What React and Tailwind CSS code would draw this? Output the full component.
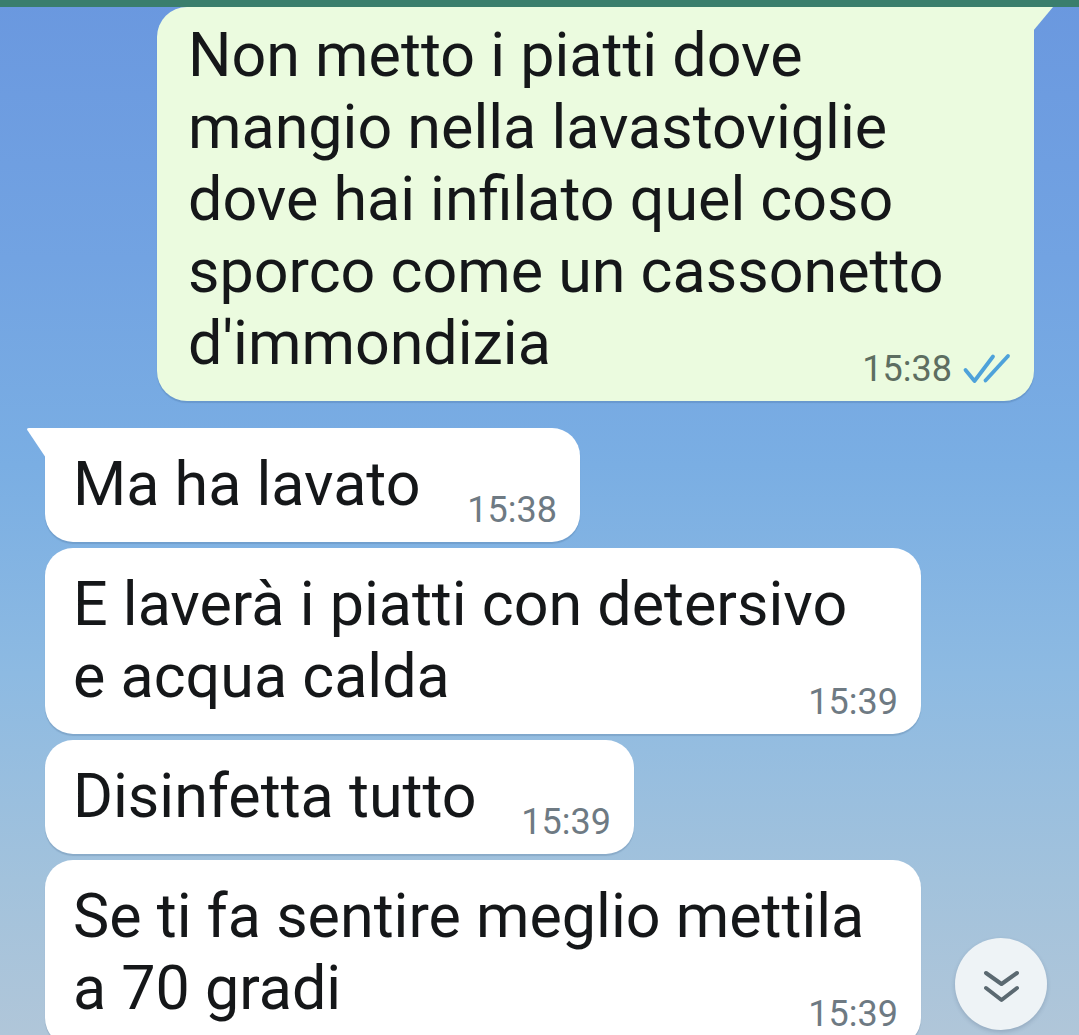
import React from "react";

const font = { fontFamily: "Roboto, 'Noto Sans', sans-serif" };

function Ticks() {
  return (
    <svg width="50" height="32" viewBox="0 0 50 32" className="ml-[10px] mb-[2px]" fill="none">
      <path d="M3.5 17 L12.5 28 L31 3.5" stroke="#4ea2da" strokeWidth="3.8" strokeLinecap="round" strokeLinejoin="round" />
      <path d="M23.5 27.5 L46 3" stroke="#4ea2da" strokeWidth="3.8" strokeLinecap="round" />
    </svg>
  );
}

function Incoming({ width, tail, lines, time }) {
  return (
    <div
      className={`relative bg-white pl-[28px] pr-[23px] pt-[20px] pb-[14px] shadow-[0_2px_1px_rgba(40,70,110,0.18)] ${
        tail ? "rounded-[28px] rounded-tl-none" : "rounded-[28px]"
      }`}
      style={{ width }}
    >
      {tail && (
        <svg width="20" height="30" viewBox="0 0 20 30" className="absolute -left-[19px] top-0">
          <path d="M20 0 H3 Q0 0 1.6 2.6 L20 30 Z" fill="#ffffff" />
        </svg>
      )}
      <p className="text-[61px] leading-[72px] text-[#151719]">
        {lines.map((l, i) => (
          <React.Fragment key={i}>
            {l}
            {i < lines.length - 1 && <br />}
          </React.Fragment>
        ))}
      </p>
      <div className="flex justify-end -mt-[28px]">
        <span className="text-[36px] leading-[36px] text-[#6e7a83]">{time}</span>
      </div>
    </div>
  );
}

export default function App() {
  return (
    <div
      className="relative w-[1079px] h-[1035px] overflow-hidden bg-[linear-gradient(180deg,#6a98df_0%,#72a3e2_25%,#7aaee3_45%,#8dbae2_65%,#a2c2dc_85%,#b0c6d9_100%)]"
      style={font}
    >
      <div className="h-[7px] bg-[#3a7e6c]" />

      <div className="relative ml-[157px] w-[877px] rounded-[30px] rounded-tr-none bg-[#ebfbdf] pl-[31px] pr-[22px] pt-[12px] pb-[14px] shadow-[0_2px_1px_rgba(40,70,110,0.18)]">
        <svg width="21" height="24" viewBox="0 0 21 24" className="absolute -right-[20px] top-0">
          <path d="M0 0 H20 L0 24 Z" fill="#ebfbdf" />
        </svg>
        <p className="text-[61px] leading-[72px] text-[#151719]">
          Non metto i piatti dove
          <br />
          mangio nella lavastoviglie
          <br />
          dove hai infilato quel coso
          <br />
          sporco come un cassonetto
          <br />
          d'immondizia
        </p>
        <div className="flex justify-end items-end -mt-[28px]">
          <span className="text-[36px] leading-[36px] text-[#5d6e61]">15:38</span>
          <Ticks />
        </div>
      </div>

      <div className="flex flex-col items-start gap-[6px] mt-[27px] ml-[45px]">
        <Incoming width={535} tail lines={["Ma ha lavato"]} time="15:38" />
        <Incoming width={876} lines={["E laverà i piatti con detersivo", "e acqua calda"]} time="15:39" />
        <Incoming width={589} lines={["Disinfetta tutto"]} time="15:39" />
        <Incoming width={876} lines={["Se ti fa sentire meglio mettila", "a 70 gradi"]} time="15:39" />
      </div>

      <button className="absolute left-[955px] top-[938px] w-[92px] h-[92px] rounded-full bg-[#eef3f6] shadow-[0_2px_4px_rgba(40,60,90,0.2)] flex items-center justify-center">
        <svg width="40" height="40" viewBox="0 0 40 40" fill="none">
          <path d="M5 9 L20.5 20 L36 9" stroke="#5b6971" strokeWidth="4" strokeLinecap="round" strokeLinejoin="round" />
          <path d="M5 24 L20.5 36 L36 24" stroke="#5b6971" strokeWidth="4" strokeLinecap="round" strokeLinejoin="round" />
        </svg>
      </button>
    </div>
  );
}
